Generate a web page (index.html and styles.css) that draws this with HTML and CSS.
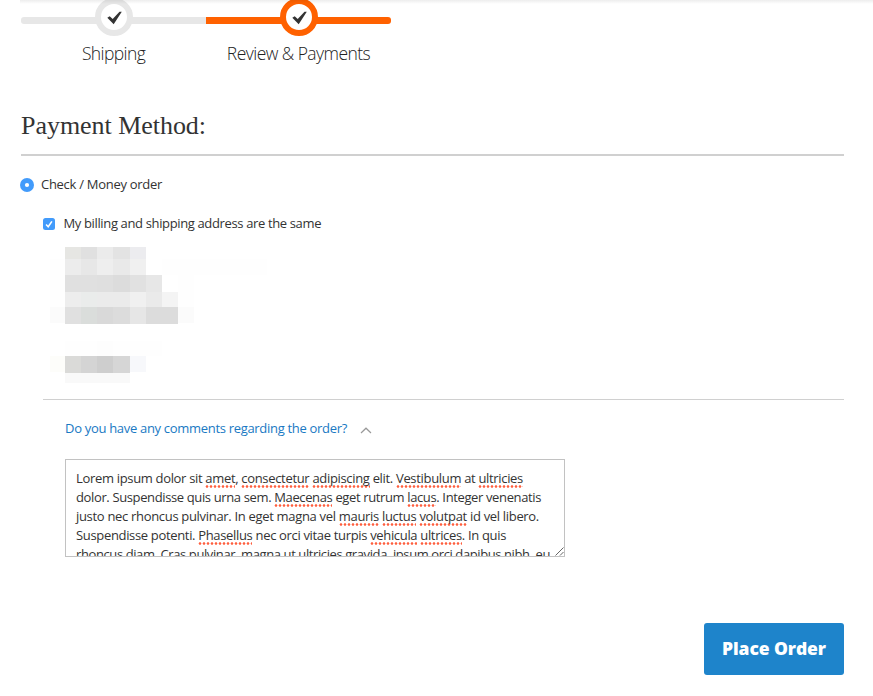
FILE: index.html
```html
<!DOCTYPE html>
<html lang="en">
<head>
<meta charset="utf-8">
<title>Review &amp; Payments</title>
<link rel="stylesheet" href="styles.css">
</head>
<body>
<div class="top-shadow"></div>
<ol class="steps">
  <li class="step">
    <svg class="mark" width="38" height="38" viewBox="0 0 38 38"><circle cx="19" cy="19" r="16"/><path d="M12.3 19.8 14.7 18.3 17.7 21 24.5 13.8 26.8 13.8 18.7 26.2Z"/></svg>
    <span class="label label-shipping">Shipping</span>
  </li>
  <li class="step active">
    <svg class="mark" width="38" height="38" viewBox="0 0 38 38"><circle cx="19" cy="19" r="16"/><path d="M12.3 19.8 14.7 18.3 17.7 21 24.5 13.8 26.8 13.8 18.7 26.2Z"/></svg>
    <span class="label label-review">Review &amp; Payments</span>
  </li>
</ol>
<main>
  <h1>Payment Method:</h1>
  <div class="method">
    <svg width="14" height="14"><circle cx="7" cy="7" r="7" fill="#429bfb"/><circle cx="7" cy="7" r="2.1" fill="#fff"/></svg>
    <span>Check / Money order</span>
  </div>
  <section class="details">
    <div class="same">
      <svg width="12" height="12"><rect width="12" height="12" rx="2.5" fill="#429bfb"/><path d="M3.1 6.5 5.2 8.8 8.9 3.4" fill="none" stroke="#fff" stroke-width="1.6"/></svg>
      <span>My billing and shipping address are the same</span>
    </div>
    <svg class="address" width="226" height="142" viewBox="50 243 226 142" shape-rendering="crispEdges">
      <path fill="#fefefe" d="M50 259h15v48H50zM162 259h105v16H162zM178 275h16v32h-16zM65 341h97v15H65z"/>
      <path fill="#fbfbfb" d="M50 307h15v16H50zM178 307h16v16h-16z"/><path fill="#fdfdfd" d="M97 341h16v15H97z"/>
      <path fill="#e6e6e3" d="M65 247h16v12H65z"/><path fill="#e0e0e0" d="M81 247h16v12H81z"/><path fill="#ebebeb" d="M97 247h16v12H97z"/><path fill="#e3e3e3" d="M113 247h17v12h-17z"/><path fill="#ececef" d="M130 247h16v12h-16z"/>
      <path fill="#ececec" d="M65 259h16v16H65z"/><path fill="#e7e7e7" d="M81 259h16v16H81z"/><path fill="#eeeeee" d="M97 259h16v16H97z"/><path fill="#e9e9e9" d="M113 259h17v16h-17z"/><path fill="#f0f0f0" d="M130 259h16v16h-16z"/>
      <path fill="#e0e0e0" d="M65 275h32v17H65z"/><path fill="#dfdfdf" d="M97 275h16v17H97z"/><path fill="#dcdcdc" d="M113 275h17v17h-17z"/><path fill="#e1e1e1" d="M130 275h16v17h-16z"/><path fill="#e7e7e7" d="M146 275h16v17h-16z"/>
      <path fill="#ededed" d="M65 292h16v15H65z"/><path fill="#eaeceb" d="M81 292h16v15H81z"/><path fill="#ebebeb" d="M97 292h33v15H97z"/><path fill="#f0f0f0" d="M130 292h16v15h-16z"/><path fill="#eaeaea" d="M146 292h16v15h-16z"/><path fill="#f4f4f4" d="M162 292h16v15h-16z"/>
      <path fill="#e0e0e0" d="M65 307h16v17H65z"/><path fill="#dadddb" d="M81 307h16v17H81z"/><path fill="#d9d9d9" d="M97 307h16v17H97z"/><path fill="#dcdcdc" d="M113 307h17v17h-17z"/><path fill="#e6e6e6" d="M130 307h16v17h-16z"/><path fill="#dcdcdc" d="M146 307h32v17h-32z"/>
      <path fill="#fdfdfa" d="M50 356h15v16H50z"/><path fill="#dadad8" d="M65 356h16v17H65z"/><path fill="#d4d4d4" d="M81 356h16v17H81z"/><path fill="#cecece" d="M97 356h16v17H97z"/><path fill="#d6d6d6" d="M113 356h17v17h-17z"/><path fill="#f7f8fb" d="M130 356h16v16h-16z"/><path fill="#f9f9f9" d="M65 373h65v10H65z"/>
    </svg>
    <div class="toggle">
      <span>Do you have any comments regarding the order?</span>
      <svg width="12" height="7" viewBox="0 0 12 7"><path d="M1 6 6 1.2 11 6" fill="none" stroke="#999" stroke-width="1.2"/></svg>
    </div>
    <div class="comments">
      <p class="l1">Lorem ipsum dolor sit <u>amet</u>, <u>consectetur</u> <u>adipiscing</u> elit. <u>Vestibulum</u> at <u>ultricies</u></p>
      <p class="l2">dolor. Suspendisse quis urna sem. <u>Maecenas</u> eget rutrum <u>lacus</u>. Integer venenatis</p>
      <p class="l3">justo nec rhoncus pulvinar. In eget magna vel <u>mauris</u> <u>luctus</u> <u>volutpat</u> id vel libero.</p>
      <p class="l4">Suspendisse potenti. <u>Phasellus</u> nec orci vitae turpis <u>vehicula</u> <u>ultrices</u>. In quis</p>
      <p class="l5">rhoncus diam. Cras pulvinar, magna ut ultricies gravida, ipsum orci dapibus nibh, eu</p>
      <svg class="grip" width="9" height="9"><path d="M.5 8.5 8.5.5M5 8.5 8.5 5" stroke="#666" stroke-width="1"/></svg>
    </div>
  </section>
  <button class="place-order">Place Order</button>
</main>
</body>
</html>
```
FILE: styles.css
```css
* { box-sizing: border-box; }
body {
  margin: 0;
  height: 696px;
  overflow: hidden;
  background: #fff;
  color: #333;
  font: 13px/19px "Open Sans", "Noto Sans", sans-serif;
  white-space: nowrap;
}
svg { display: block; flex: none; }

.top-shadow {
  position: absolute;
  z-index: 2;
  top: 0;
  left: 20px;
  right: 0;
  height: 4px;
  background: linear-gradient(rgba(0, 0, 0, .07), transparent);
}

.steps {
  display: flex;
  width: 370px;
  height: 82px;
  margin: 0 0 0 21px;
  padding: 0;
  list-style: none;
}
.step {
  display: flex;
  flex: 1;
  flex-direction: column;
  align-items: center;
  position: relative;
}
.step::before {
  content: "";
  position: absolute;
  z-index: -1;
  top: 17px;
  left: 0;
  width: 100%;
  height: 7px;
  border-radius: 3px 0 0 3px;
  background: #e7e7e7;
}
.mark { margin-top: -2px; }
.mark circle { fill: #fff; stroke: #e7e7e7; stroke-width: 6; }
.mark path { fill: #333; }
.active::before { border-radius: 0 3px 3px 0; background: #ff6100; }
.active .mark circle { stroke: #ff6100; }
.label { margin-top: 5px; color: #222; font-size: 17.5px; font-weight: 300; line-height: 24px; }
.label-shipping { letter-spacing: -.6px; }
.label-review { letter-spacing: -.56px; }

main { display: flex; flex-direction: column; padding: 0 29px 0 21px; }
h1 {
  height: 74px;
  margin: 0;
  padding-top: 28px;
  border-bottom: 2px solid #d0d0d0;
  font: 26px/32px "Liberation Serif", serif;
  letter-spacing: -.04px;
}
.method { display: flex; align-items: center; gap: 7px; margin: 19px 0 20px -1px; letter-spacing: -.285px; }
.details { margin-left: 22px; }
.same { display: flex; align-items: center; gap: 8.5px; letter-spacing: -.36px; }
.address { margin: 10px 0 0 7px; }
.toggle {
  display: flex;
  align-items: center;
  gap: 13px;
  margin-top: 14px;
  padding: 19px 0 0 22px;
  border-top: 1px solid #d0d0d0;
  color: #1979c3;
  letter-spacing: -.307px;
}
.toggle svg { margin-top: 3px; }
.comments {
  position: relative;
  width: 500px;
  height: 98px;
  margin: 21px 0 0 22px;
  padding: 9px 10px;
  overflow: hidden;
  border: 1px solid #c2c2c2;
}
.comments p { margin: 0; }
.comments u {
  padding-bottom: 1px;
  text-decoration: none;
  background: radial-gradient(circle, #ff5f3e .8px, rgba(255, 95, 62, 0) 1.8px) 0 100% / 4px 3px repeat-x;
}
.l1 { letter-spacing: -.326px; }
.l2 { letter-spacing: -.37px; }
.l3 { letter-spacing: -.316px; }
.l4 { letter-spacing: -.333px; }
.l5 { letter-spacing: -.4px; }
.grip { position: absolute; right: 0; bottom: 0; background: #fff; }

.place-order {
  align-self: flex-end;
  width: 140px;
  height: 52px;
  margin-top: 66px;
  padding: 0 0 2px;
  border: 0;
  border-radius: 3px;
  background: #1e84cb;
  color: #fff;
  font: 800 17.5px/24px "Open Sans", "Noto Sans", sans-serif;
  letter-spacing: -.1px;
}
```
